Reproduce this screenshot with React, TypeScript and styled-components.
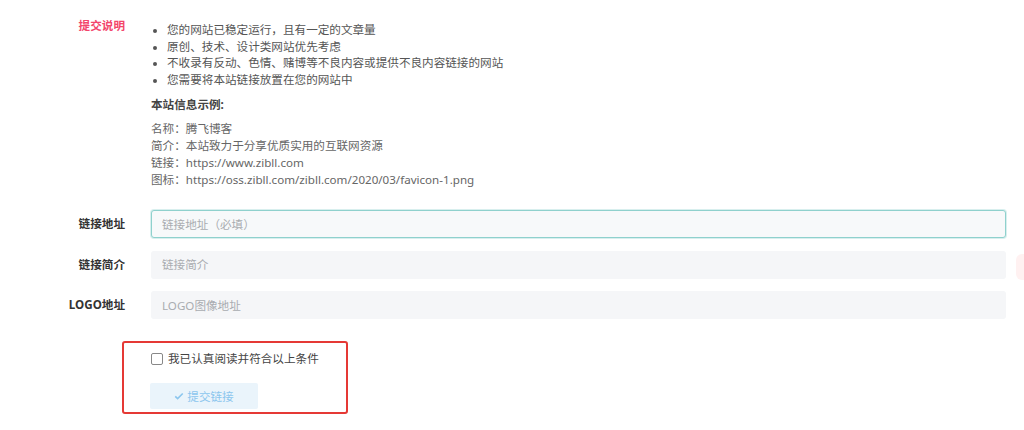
import styled, { createGlobalStyle } from "styled-components";

const GlobalStyle = createGlobalStyle`
  body {
    margin: 0;
    background: #ffffff;
    font-family: "Noto Sans", "Noto Sans CJK SC", sans-serif;
    color: #555;
  }
`;

const Page = styled.div`
  position: relative;
  width: 1024px;
  height: 430px;
  overflow: hidden;
  padding: 18px 18px 0 0;
  box-sizing: border-box;
`;

const Row = styled.div<{ $gap?: number }>`
  display: grid;
  grid-template-columns: 125px 1fr;
  column-gap: 26px;
  align-items: center;
  margin-bottom: ${(p) => p.$gap ?? 12.5}px;
`;

const TopRow = styled(Row)`
  align-items: start;
`;

const Label = styled.div<{ $accent?: boolean }>`
  text-align: right;
  font-size: 11.6px;
  font-weight: 700;
  line-height: 16px;
  color: ${(p) => (p.$accent ? "#f3456b" : "#333")};
`;

const Notes = styled.ul`
  margin: 4px 0 0;
  padding: 0 0 0 16px;
  list-style: disc;
  font-size: 11.6px;
  line-height: 16.5px;
  color: #555;
  li::marker {
    font-size: 10px;
  }
`;

const ExampleTitle = styled.div`
  margin-top: 9px;
  font-size: 11.6px;
  font-weight: 700;
  line-height: 16px;
  color: #444;
`;

const ExampleList = styled.div`
  margin-top: 7px;
  font-size: 11.6px;
  line-height: 17px;
  color: #666;
`;

const Input = styled.input<{ $focus?: boolean }>`
  box-sizing: border-box;
  width: 100%;
  height: 28px;
  padding: 0 10px;
  border-radius: 3px;
  border: 1px solid ${(p) => (p.$focus ? "#8fd1cd" : "transparent")};
  box-shadow: ${(p) => (p.$focus ? "0 0 0 1px rgba(143,209,205,0.35)" : "none")};
  background: ${(p) => (p.$focus ? "#f7f9fa" : "#f5f6f8")};
  font-family: inherit;
  font-size: 11.6px;
  color: #444;
  outline: none;
  &::placeholder {
    color: #a9acb0;
  }
`;

const SubmitArea = styled.div`
  margin: 22px 0 0 122px;
  width: 226px;
  height: 73px;
  box-sizing: border-box;
  border: 2px solid #e53935;
  border-radius: 3px;
  padding: 8px 0 0 26px;
`;

const Agree = styled.label`
  display: flex;
  align-items: center;
  gap: 5px;
  font-size: 11.6px;
  line-height: 16px;
  color: #444;
  margin-left: 1px;
`;

const Box = styled.span`
  width: 10px;
  height: 10px;
  border: 1px solid #888;
  border-radius: 2px;
  background: #fff;
`;

const SubmitButton = styled.button`
  margin-top: 16px;
  width: 108px;
  height: 26px;
  border: none;
  border-radius: 2px;
  background: #eaf4fb;
  color: #8cc6ee;
  font-family: inherit;
  font-size: 11.6px;
  display: flex;
  align-items: center;
  justify-content: center;
  gap: 3px;
  cursor: not-allowed;
`;

const SideTab = styled.div`
  position: absolute;
  right: -6px;
  top: 254px;
  width: 14px;
  height: 26px;
  border-radius: 6px;
  background: #fff1f1;
`;

const notes = [
  "您的网站已稳定运行，且有一定的文章量",
  "原创、技术、设计类网站优先考虑",
  "不收录有反动、色情、赌博等不良内容或提供不良内容链接的网站",
  "您需要将本站链接放置在您的网站中",
];

const example = [
  "名称：腾飞博客",
  "简介：本站致力于分享优质实用的互联网资源",
  "链接：https://www.zibll.com",
  "图标：https://oss.zibll.com/zibll.com/2020/03/favicon-1.png",
];

function Check() {
  return (
    <svg width="10" height="10" viewBox="0 0 16 16">
      <path d="M2 8.5l3.8 3.8L14 4" fill="none" stroke="currentColor" strokeWidth="2.6" />
    </svg>
  );
}

export default function App() {
  return (
    <Page>
      <GlobalStyle />
      <TopRow $gap={22}>
        <Label $accent>提交说明</Label>
        <div>
          <Notes>
            {notes.map((n) => (
              <li key={n}>{n}</li>
            ))}
          </Notes>
          <ExampleTitle>本站信息示例:</ExampleTitle>
          <ExampleList>
            {example.map((e) => (
              <div key={e}>{e}</div>
            ))}
          </ExampleList>
        </div>
      </TopRow>
      <Row>
        <Label>链接地址</Label>
        <Input $focus placeholder="链接地址（必填）" />
      </Row>
      <Row>
        <Label>链接简介</Label>
        <Input placeholder="链接简介" />
      </Row>
      <Row $gap={0}>
        <Label>LOGO地址</Label>
        <Input placeholder="LOGO图像地址" />
      </Row>
      <SubmitArea>
        <Agree>
          <Box />
          我已认真阅读并符合以上条件
        </Agree>
        <SubmitButton>
          <Check />
          提交链接
        </SubmitButton>
      </SubmitArea>
      <SideTab />
    </Page>
  );
}
